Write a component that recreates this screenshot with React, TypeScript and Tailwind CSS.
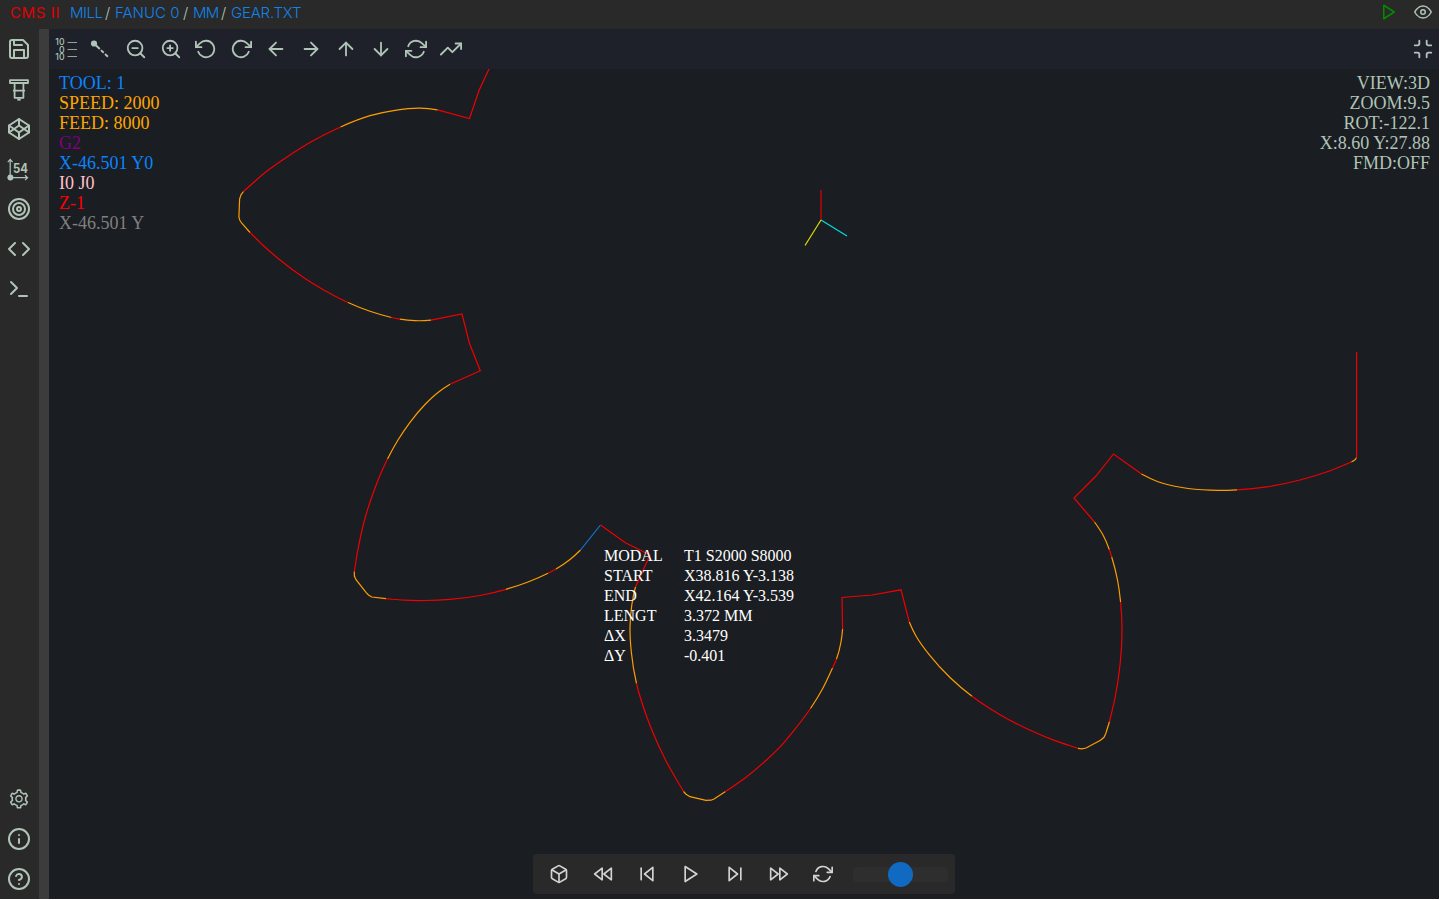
import type { ReactNode } from "react";
import {
  FiArrowDown, FiArrowLeft, FiArrowRight, FiArrowUp, FiBox, FiCode, FiCodepen, FiEye, FiFastForward,
  FiHelpCircle, FiInfo, FiMinimize, FiPlay, FiRefreshCw, FiRewind, FiRotateCcw, FiRotateCw, FiSave,
  FiSkipBack, FiSkipForward, FiTarget, FiTerminal, FiTrendingUp, FiZoomIn, FiZoomOut,
} from "react-icons/fi";
import { AiOutlineSetting } from "react-icons/ai";

type Pt = [number, number];
type Segment = { c: string; p: Pt[]; sharp?: boolean; tip?: boolean };

const RED = "#f00000";
const ORANGE = "#ff9d00";
const BLUE = "#1277dd";

const segments: Segment[] = [
  { c: RED, sharp: true, p: [[489, 69], [479, 90.5], [469.5, 118.5], [437.5, 109.8]] },
  { c: ORANGE, p: [[437.5, 109.8], [420, 108.2], [395, 110.3], [370, 115.7], [340.5, 127]] },
  { c: RED, p: [[340.5, 127], [313, 140.8], [284, 159], [268, 170.3], [243.5, 191.5]] },
  { c: ORANGE, tip: true, sharp: true, p: [[243.5, 191.5], [241, 194.8], [239.6, 199], [238.9, 217], [239.8, 220.3], [242, 223.5], [250, 232.5]] },
  { c: RED, p: [[250, 232.5], [263, 245.3], [280, 260], [305, 278.5], [325, 290.7], [348, 302.5]] },
  { c: ORANGE, p: [[348, 302.5], [370, 311.3], [391.5, 317.5]] },
  { c: RED, p: [[391.5, 317.5], [400, 319.2]] },
  { c: ORANGE, p: [[400, 319.2], [415, 320.7], [431, 320.2]] },
  { c: RED, sharp: true, p: [[431, 320.2], [462, 314], [469.5, 343.5], [480.3, 370.7], [450, 384.3]] },
  { c: ORANGE, p: [[450, 384.3], [438, 392.5], [425, 404.5], [410, 422.3], [398, 440], [387.5, 459]] },
  { c: RED, p: [[387.5, 459], [375, 488], [364, 522], [357.5, 552], [354.3, 571.5]] },
  { c: ORANGE, tip: true, sharp: true, p: [[354.3, 571.5], [354.4, 576], [356, 579.7], [366, 592.3], [368.5, 595], [371.7, 597], [386, 598.7]] },
  { c: RED, p: [[386, 598.7], [404, 600.2], [425, 600.5], [450, 599.4], [480, 595.5], [506, 589.3]] },
  { c: ORANGE, p: [[506, 589.3], [528, 582], [548, 573.3]] },
  { c: RED, p: [[548, 573.3], [556, 569]] },
  { c: ORANGE, p: [[556, 569], [570, 559.5], [580.5, 550]] },
  { c: BLUE, sharp: true, p: [[580.5, 550], [600.5, 525]] },
  { c: RED, sharp: true, p: [[600.5, 525], [625, 542.5], [650, 555], [635.5, 587]] },
  { c: ORANGE, p: [[635.5, 587], [631.8, 605], [630, 627], [631.3, 652], [636.5, 683.5]] },
  { c: RED, p: [[636.5, 683.5], [646.5, 716], [653.5, 734], [665, 759], [683.5, 791.5]] },
  { c: ORANGE, tip: true, sharp: true, p: [[683.5, 791.5], [686, 794.2], [690, 796.7], [706, 800.3], [711, 800.2], [714, 799], [725.5, 791.5]] },
  { c: RED, p: [[725.5, 791.5], [746.7, 776.7], [766.5, 760], [783.3, 743.3], [796.7, 727], [810.5, 708.5]] },
  { c: ORANGE, p: [[810.5, 708.5], [823, 688], [832.5, 668]] },
  { c: RED, p: [[832.5, 668], [836.5, 659]] },
  { c: ORANGE, p: [[836.5, 659], [841, 642], [842.6, 629]] },
  { c: RED, sharp: true, p: [[842.6, 629], [842, 597.5], [872, 595], [901, 589.8], [909.3, 622]] },
  { c: ORANGE, p: [[909.3, 622], [916, 636], [930, 655.7], [950, 677.5], [972, 696.3]] },
  { c: RED, p: [[972, 696.3], [1000, 714.7], [1028, 729.3], [1055, 740.6], [1078, 748.3]] },
  { c: ORANGE, tip: true, sharp: true, p: [[1078, 748.3], [1082, 748.8], [1086, 748], [1100.5, 740.3], [1104, 737.3], [1105.8, 733.5], [1109.5, 721.5]] },
  { c: RED, p: [[1109.5, 721.5], [1115, 698], [1120, 665], [1122, 630], [1120.6, 602]] },
  { c: ORANGE, p: [[1120.6, 602], [1117.5, 580], [1111.7, 557]] },
  { c: RED, p: [[1111.7, 557], [1109.3, 549.5]] },
  { c: ORANGE, p: [[1109.3, 549.5], [1103, 535], [1094.5, 522]] },
  { c: RED, sharp: true, p: [[1094.5, 522], [1074, 498], [1095.5, 476.5], [1113.5, 454], [1141.5, 474]] },
  { c: ORANGE, p: [[1141.5, 474], [1158, 481.7], [1182, 487.5], [1210, 490.2], [1237, 489.8]] },
  { c: RED, p: [[1237, 489.8], [1267, 486.8], [1300, 480], [1328, 471.5], [1351.5, 462]] },
  { c: ORANGE, tip: true, sharp: true, p: [[1351.5, 462], [1355, 459.8], [1356.6, 457.5]] },
  { c: RED, sharp: true, p: [[1356.6, 457.5], [1356.6, 352]] },
];

const dist = (a: Pt, b: Pt) => Math.hypot(b[0] - a[0], b[1] - a[1]) || 1;

// Chord-weighted direction of the curve at b, between its neighbours a and c.
function tangent(a: Pt | undefined, b: Pt, c: Pt | undefined): Pt {
  const h0 = a ? dist(a, b) : 0;
  const h1 = c ? dist(b, c) : 0;
  const d0: Pt = a ? [(b[0] - a[0]) / h0, (b[1] - a[1]) / h0] : [0, 0];
  const d1: Pt = c ? [(c[0] - b[0]) / h1, (c[1] - b[1]) / h1] : [0, 0];
  if (!a) return d1;
  if (!c) return d0;
  return [(d0[0] * h1 + d1[0] * h0) / (h0 + h1), (d0[1] * h1 + d1[1] * h0) / (h0 + h1)];
}

// Straight lines for sharp segments, otherwise a spline that continues its neighbours.
function toPath({ p, sharp }: Segment, index: number): string {
  if (sharp) return "M" + p.map((q) => q.join(" ")).join("L");
  const prev = segments[index - 1];
  const next = segments[index + 1];
  const before = prev && !prev.tip ? prev.p.at(-2) : undefined;
  const after = next && !next.tip ? next.p[1] : undefined;
  let d = `M${p[0].join(" ")}`;
  for (let i = 0; i < p.length - 1; i++) {
    const b = p[i];
    const c = p[i + 1];
    const m0 = tangent(i ? p[i - 1] : before, b, c);
    const m1 = tangent(b, c, i + 2 < p.length ? p[i + 2] : after);
    const h = dist(b, c) / 3;
    d += `C${b[0] + m0[0] * h} ${b[1] + m0[1] * h} ${c[0] - m1[0] * h} ${c[1] - m1[1] * h} ${c[0]} ${c[1]}`;
  }
  return d;
}

function SpindleIcon() {
  return (
    <svg width="24" height="24" viewBox="0 0 24 24" fill="none" stroke="currentColor" strokeWidth="1.8" strokeLinejoin="round">
      <path d="M3 3.200h18v2.800H3z" />
      <path d="M7.600 6v7.500M16.400 6v7.500M6 13.700h12M7.600 14v6.800h8.800V14" />
      <path d="M10.300 22.600h3.400" strokeWidth="2" />
    </svg>
  );
}

function OffsetIcon() {
  return (
    <svg width="24" height="24" viewBox="0 0 24 24" fill="none" stroke="currentColor">
      <path d="M3.200 20V3M.8 5.200 3.200 2.400l2.400 2.800M3 20.700h17M18 18.300l2.600 2.400-2.600 2.400" strokeWidth="1.2" />
      <circle cx="3.400" cy="20.400" r="3" fill="currentColor" stroke="none" />
      <text x="6" y="15.600" textLength="15" lengthAdjust="spacingAndGlyphs" className="font-['Inter',sans-serif] text-[12.5px] font-bold" fill="currentColor" stroke="none">54</text>
    </svg>
  );
}

function LineNumbersIcon() {
  return (
    <svg width="22" height="24" viewBox="0 0 22 24" fill="none" stroke="currentColor">
      <g className="font-['Inter',sans-serif] text-[8.7px] font-medium" fill="currentColor" stroke="none" textAnchor="end">
        <text x="9.500" y="8.200">10</text>
        <text x="9.500" y="15.700">0</text>
        <text x="9.500" y="23.200">10</text>
      </g>
      <path d="M12.500 5.500H22M12.500 12.500H22M12.500 19.500H22" strokeWidth="1" opacity=".8" />
    </svg>
  );
}

function SegmentIcon() {
  return (
    <svg width="22" height="22" viewBox="0 0 22 22" fill="none" stroke="currentColor">
      <circle cx="4" cy="5.500" r="3.100" fill="currentColor" stroke="none" />
      <path d="M4 5.500 18 18.800" strokeWidth="1.900" strokeDasharray="8 1.600 3.800 1.800 4" />
    </svg>
  );
}

function Cell({ children, className = "" }: { children: ReactNode; className?: string }) {
  return <button className={`flex shrink-0 items-center justify-center ${className}`}>{children}</button>;
}

const sideTop = [<FiSave size={24} />, <SpindleIcon />, <FiCodepen size={24} />, <OffsetIcon />, <FiTarget size={24} />, <FiCode size={24} />, <FiTerminal size={24} />];
const sideBottom = [<AiOutlineSetting size={22} />, <FiInfo size={24} />, <FiHelpCircle size={24} />];
const tools = [
  <LineNumbersIcon />, <SegmentIcon />, <FiZoomOut size={22} />, <FiZoomIn size={22} />, <FiRotateCcw size={22} />, <FiRotateCw size={22} />,
  <FiArrowLeft size={22} />, <FiArrowRight size={22} />, <FiArrowUp size={22} />, <FiArrowDown size={22} />, <FiRefreshCw size={22} />, <FiTrendingUp size={22} />,
];
const playback = [<FiBox />, <FiRewind />, <FiSkipBack />, <FiPlay />, <FiSkipForward />, <FiFastForward />, <FiRefreshCw />];

const readout = [
  ["TOOL: 1", "text-[#0a84ff]"],
  ["SPEED: 2000", "text-[#ffa500]"],
  ["FEED: 8000", "text-[#ffa500]"],
  ["G2", "text-[#800080]"],
  ["X-46.501 Y0", "text-[#0a84ff]"],
  ["I0 J0", "text-[#ffc0cb]"],
  ["Z-1", "text-[#ff0000]"],
  ["X-46.501 Y", "text-[#808080]"],
];

const details = [
  ["MODAL", "T1 S2000 S8000"],
  ["START", "X38.816 Y-3.138"],
  ["END", "X42.164 Y-3.539"],
  ["LENGT", "3.372 MM"],
  ["ΔX", "3.3479"],
  ["ΔY", "-0.401"],
];

export default function App() {
  return (
    <div className="flex h-[899px] w-[1439px] flex-col overflow-hidden bg-[#1a1d21] text-[#b0c4b8]">
      <header className="flex h-[29px] shrink-0 items-center justify-between bg-[#292929] pb-[5px] pl-[10px] pr-[7px] font-['Inter',sans-serif] text-[15px] leading-none">
        <div className="flex items-center whitespace-pre">
          <span className="w-[60px] tracking-[0.6px] text-[#e00000]">CMS II</span>
          <span className="w-[35px] font-light tracking-[-0.5px] text-[#1482e8]">MILL</span>
          <span className="w-[10px] font-light">/</span>
          <span className="w-[68px] font-light text-[#1482e8]">FANUC 0</span>
          <span className="w-[10px] font-light">/</span>
          <span className="w-7 font-light tracking-[-0.8px] text-[#1482e8]">MM</span>
          <span className="w-[10px] font-light">/</span>
          <span className="font-light tracking-[-0.2px] text-[#1482e8]">GEAR.TXT</span>
        </div>
        <div className="flex items-center gap-4">
          <FiPlay size={18} className="text-[#008c00]" />
          <FiEye size={18} />
        </div>
      </header>

      <div className="flex min-h-0 flex-1">
        <nav className="flex w-[39px] shrink-0 flex-col justify-between bg-[#292929]">
          <div>{sideTop.map((icon, i) => <Cell key={i} className="h-10 w-[38px]">{icon}</Cell>)}</div>
          <div>{sideBottom.map((icon, i) => <Cell key={i} className="h-10 w-[38px]">{icon}</Cell>)}</div>
        </nav>
        <div className="w-[10px] shrink-0 bg-[#3c3c3c]" />

        <main className="flex min-w-0 flex-1 flex-col">
          <div className="flex h-10 shrink-0 items-center justify-between bg-[#1e2129] pr-[5px]">
            <div className="-ml-px flex">{tools.map((icon, i) => <Cell key={i} className="h-10 w-[35px]">{icon}</Cell>)}</div>
            <FiMinimize size={22} />
          </div>

          <section className="relative min-h-0 flex-1 font-['Liberation_Serif',serif]">
            <svg className="absolute inset-0 h-full w-full" viewBox="49 69 1390 830" fill="none" strokeWidth="1.200">
              {segments.map((s, i) => <path key={i} d={toPath(s, i)} stroke={s.c} />)}
              <path d="M821 220V190" stroke="#e00000" />
              <path d="M821 220 847 236" stroke="#00e0e0" />
              <path d="M821 220 805 245.500" stroke="#e0e000" />
            </svg>

            <div className="absolute left-[10px] top-1 text-[18px] leading-5">
              {readout.map(([label, color], i) => <div key={i} className={color}>{label}</div>)}
            </div>
            <div className="absolute right-[9px] top-1 text-right text-[18px] leading-5">
              <div>VIEW:3D</div>
              <div>ZOOM:9.5</div>
              <div>ROT:-122.1</div>
              <div>X:8.60 Y:27.88</div>
              <div>FMD:OFF</div>
            </div>

            <div className="absolute left-[555px] top-[477px] grid grid-cols-[80px_auto] text-[16px] leading-5 text-white">
              {details.map(([k, v]) => (
                <div key={k} className="contents"><span>{k}</span><span>{v}</span></div>
              ))}
            </div>

            <div className="absolute left-[484px] top-[785px] flex h-10 w-[422px] items-center rounded bg-[#292929] pl-1 text-[20px] text-[#d3d3d3]">
              {playback.map((icon, i) => <Cell key={i} className="h-10 w-11">{icon}</Cell>)}
              <div className="relative ml-2 h-[15px] w-[95px] rounded bg-[#2e2e2e]">
                <div className="absolute -top-[5px] left-[35px] h-[25px] w-[25px] rounded-full bg-[#106ac2]" />
              </div>
            </div>
          </section>
        </main>
      </div>
    </div>
  );
}
